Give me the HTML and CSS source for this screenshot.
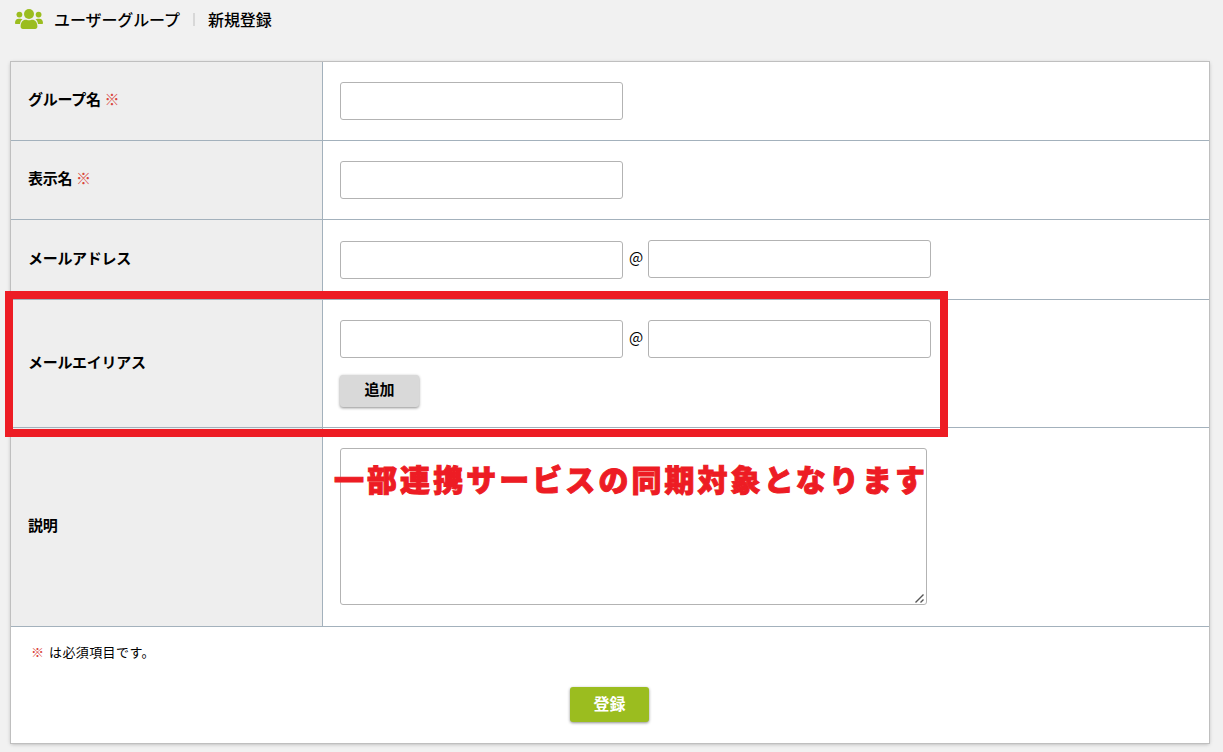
FILE: index.html
```html
<!DOCTYPE html>
<html lang="ja">

<head>
    <meta charset="UTF-8">
    <meta name="viewport" content="width=device-width, initial-scale=1.0">
    <title>ユーザーグループ 新規登録</title>
    <link rel="stylesheet" href="styles.css">
</head>

<body>
    <header class="page-header">
        <svg class="icon-group" viewBox="0 0 28 20" width="28" height="20">
            <circle cx="4.4" cy="5.6" r="2.9"/>
            <circle cx="23.6" cy="5.6" r="2.9"/>
            <path d="M0 14c0-2.800 1.500-4.300 3.700-4.300h1.700c.9 0 1.600.2 2.100.600-1.300.900-2.100 2.300-2.500 4.700H1.100c-.7 0-1.100-.4-1.100-1z"/>
            <path d="M28 14c0-2.800-1.500-4.300-3.700-4.300h-1.700c-.9 0-1.600.2-2.100.6 1.300.9 2.100 2.300 2.500 4.700h3.900c.7 0 1.100-.4 1.100-1z"/>
            <circle cx="14" cy="5" r="5"/>
            <path d="M5.600 17.600c0-4.400 2.200-6.900 5.200-6.900.8 0 1.700.5 3.200.5s2.400-.5 3.200-.5c3 0 5.200 2.500 5.200 6.900 0 1.500-.9 2.400-2.300 2.400H7.900c-1.400 0-2.300-.9-2.300-2.400z"/>
        </svg>
        <h1>ユーザーグループ</h1>
        <span class="separator"></span>
        <h2>新規登録</h2>
    </header>

    <main>
        <form class="panel">
            <div class="row">
                <div class="row-label">グループ名<span class="required">※</span></div>
                <div class="row-field">
                    <input type="text" class="text-box">
                </div>
            </div>

            <div class="row">
                <div class="row-label">表示名<span class="required">※</span></div>
                <div class="row-field">
                    <input type="text" class="text-box">
                </div>
            </div>

            <div class="row row-mail">
                <div class="row-label">メールアドレス</div>
                <div class="row-field">
                    <div class="mail">
                        <input type="text" class="text-box">
                        <span class="at">@</span>
                        <input type="text" class="text-box">
                    </div>
                </div>
            </div>

            <div class="row">
                <div class="row-label">メールエイリアス</div>
                <div class="row-field">
                    <div class="mail">
                        <input type="text" class="text-box">
                        <span class="at">@</span>
                        <input type="text" class="text-box">
                    </div>
                    <button type="button" class="btn btn-add">追加</button>
                </div>
            </div>

            <div class="row">
                <div class="row-label">説明</div>
                <div class="row-field">
                    <div class="text-area-wrap">
                        <textarea class="text-area"></textarea>
                        <svg class="grip" viewBox="0 0 9 9" width="9" height="9">
                            <path d="M.5 8.500l8-8M5.500 8.500l3-3"/>
                        </svg>
                    </div>
                </div>
            </div>

            <div class="panel-footer">
                <p class="note"><span class="required">※</span>は必須項目です。</p>
                <button type="button" class="btn btn-submit">登録</button>
            </div>
        </form>

        <!-- 注釈 -->
        <div class="highlight"></div>
        <p class="highlight-text">一部連携サービスの同期対象となります</p>
    </main>
</body>

</html>
```

FILE: styles.css
```css
* {
    margin: 0;
    padding: 0;
    box-sizing: border-box;
}

body {
    height: 752px;
    overflow: hidden;
    font-family: "Noto Sans CJK JP", sans-serif;
    background-color: #f1f1f1;
    color: #000;
}

.page-header {
    display: flex;
    align-items: center;
    height: 40px;
    padding: 0 0 2px 15px;
}

.icon-group {
    fill: #9bbd1f;
    margin-right: 11px;
}

.page-header h1,
.page-header h2 {
    font-size: 16px;
    line-height: 24px;
    font-weight: 500;
    letter-spacing: -0.1px;
}

.page-header h1 {
    width: 128px;
    white-space: nowrap;
}

.separator {
    width: 2px;
    height: 13px;
    margin: 0 13px 0 11px;
    background-color: #d8d8d8;
}

main {
    position: relative;
    padding: 22px 14px 0 11px;
}

.panel {
    background-color: #fff;
    box-shadow: 0 0 0 1px #bfbfbf, 0 1px 4px rgba(0, 0, 0, 0.3);
}

.row {
    display: flex;
    border-bottom: 1px solid #a3b1bc;
}

.row-label {
    display: flex;
    align-items: center;
    width: 312px;
    padding: 0 0 5px 17px;
    border-right: 1px solid #a3b1bc;
    background-color: #eee;
    font-size: 15px;
    font-weight: 700;
    letter-spacing: -0.3px;
}

.row-field {
    flex: 1;
    padding: 20px 17px;
}

.required {
    margin-left: 4px;
    color: #d9453c;
    font-weight: 400;
    letter-spacing: 0;
}

.text-box,
.text-area {
    display: block;
    border: 1px solid #b3b3b3;
    border-radius: 3px;
    background-color: #fff;
}

.text-box {
    width: 283px;
    height: 38px;
    padding: 0 10px;
    font-size: 15px;
}

.text-area-wrap {
    position: relative;
    width: 587px;
    margin-bottom: 1px;
}

.text-area {
    width: 100%;
    height: 157px;
    resize: none;
}

.grip {
    position: absolute;
    right: 3px;
    bottom: 2px;
    fill: none;
    stroke: #555;
    stroke-width: 1.4;
}

.mail {
    display: flex;
}

.at {
    width: 25px;
    padding-left: 1px;
    line-height: 34px;
    font-size: 15px;
    text-align: center;
}

/* 左の入力欄だけ1px下がる */
.row-mail .text-box:first-child {
    margin-top: 1px;
}

.btn {
    display: block;
    border: none;
    border-radius: 3px;
    box-shadow: 0 1px 3px rgba(0, 0, 0, 0.45);
    font-family: inherit;
    font-weight: 700;
    cursor: pointer;
}

.btn-add {
    width: 79px;
    height: 32px;
    margin-top: 17px;
    padding-bottom: 5px;
    background-color: #d9d9d9;
    font-size: 15px;
}

.panel-footer {
    height: 116px;
    padding: 15px 20px 0;
}

.note {
    font-size: 13px;
    line-height: 20px;
    letter-spacing: 0.4px;
}

.note .required {
    margin: 0 5px 0 0;
}

.btn-submit {
    width: 79px;
    height: 35px;
    margin: 25px 0 0 539px;
    padding-bottom: 4px;
    background-color: #9bbd1f;
    color: #fff;
    font-size: 16px;
}

/* 赤枠と注釈テキスト */
.highlight {
    position: absolute;
    top: 251px;
    left: 5px;
    width: 943px;
    height: 146px;
    border: 8px solid #ed1c24;
}

.highlight-text {
    position: absolute;
    top: 416px;
    left: 334px;
    color: #ed1c24;
    font-size: 30px;
    line-height: 44px;
    font-weight: 900;
    letter-spacing: 3.05px;
    white-space: nowrap;
    -webkit-text-stroke: 1px #ed1c24;
}
```
